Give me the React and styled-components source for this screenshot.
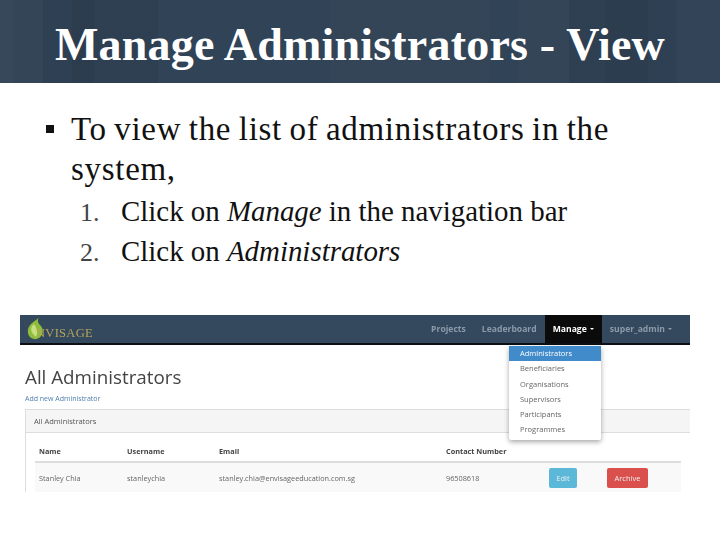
import React from 'react'
import styled, { createGlobalStyle } from 'styled-components'

const Global = createGlobalStyle`
  html, body { margin: 0; padding: 0; background: #fff; }
`

const Slide = styled.div`
  width: 720px;
  height: 540px;
  overflow: hidden;
  background: #fff;
  font-family: "Liberation Serif", serif;
`

const Banner = styled.header`
  height: 83px;
  box-sizing: border-box;
  padding: 18px 0 0 55px;
  background:
    linear-gradient(90deg,
      rgba(255,255,255,.04) 0 2%,
      rgba(255,255,255,.025) 2% 6%,
      rgba(0,0,0,.015) 6% 10%,
      rgba(0,0,0,.07) 10% 13%,
      rgba(0,0,0,.025) 13% 22%,
      rgba(255,255,255,.01) 22% 46%,
      rgba(255,255,255,.018) 46% 68%,
      rgba(255,255,255,.01) 68% 72%,
      rgba(255,255,255,.025) 72% 79%,
      rgba(0,0,0,.025) 79% 84%,
      rgba(0,0,0,.06) 84% 90%,
      rgba(0,0,0,.015) 90% 94%,
      rgba(255,255,255,.015) 94% 100%),
    #2f4154;
`

const SlideTitle = styled.h1`
  margin: 0;
  font: 700 46px/54px "Liberation Serif", serif;
  letter-spacing: .2px;
  color: #fff;
  white-space: nowrap;
`

const Content = styled.section`
  padding: 26px 0 0 46px;
  height: 232px;
  box-sizing: border-box;
  color: #111;
`

const Point = styled.div`
  display: flex;
  font-size: 33px;
  letter-spacing: .7px;
  word-spacing: -1.4px;
  line-height: 40px;
`

const Bullet = styled.span`
  flex: none;
  width: 8px;
  height: 8px;
  margin: 16px 17px 0 0;
  background: #111;
`

const Steps = styled.ol`
  list-style: none;
  margin: 2px 0 0;
  padding: 0 0 0 34px;
`

const Step = styled.li`
  display: flex;
  align-items: baseline;
  height: 40px;
  font-size: 28.9px;
  line-height: 40px;
`

const StepNo = styled.span`
  width: 41px;
  font-size: 26px;
  color: #444;
`

const Shot = styled.div`
  position: relative;
  width: 670px;
  height: 178px;
  margin-left: 20px;
  font-family: "Open Sans", sans-serif;
  filter: blur(.45px);
`

const Nav = styled.nav`
  display: flex;
  justify-content: space-between;
  height: 28px;
  background: #35495e;
  border-bottom: 2px solid #0c1014;
`

const Brand = styled.div`
  position: relative;
  display: flex;
  align-items: flex-end;
  padding: 0 0 3px 16px;
`

const BrandName = styled.span`
  position: relative;
  font: 12.5px/14px "Liberation Serif", serif;
  color: #b5a55a;
  letter-spacing: .3px;
`

const LogoMark = styled.svg`
  position: absolute;
  left: 6px;
  top: 1px;
`

const NavItems = styled.div`
  display: flex;
  margin-right: 10px;
`

const NavItem = styled.a`
  display: flex;
  align-items: center;
  padding: 0 8px;
  font-size: 8.6px;
  font-weight: 700;
  color: ${p => (p.$active ? '#fff' : '#8b9aaa')};
  background: ${p => (p.$active ? '#0b0b0b' : 'transparent')};
`

const Caret = styled.i`
  width: 0;
  height: 0;
  margin-left: 3px;
  border: 2px solid transparent;
  border-top: 2.5px solid currentColor;
  border-bottom: 0;
`

const Menu = styled.ul`
  position: absolute;
  left: 489px;
  top: 31px;
  width: 92px;
  height: 94px;
  margin: 0;
  padding: 0;
  list-style: none;
  background: #fff;
  border-radius: 0 0 2px 2px;
  box-shadow: 0 2px 5px rgba(0,0,0,.35);
  z-index: 2;
`

const MenuItem = styled.li`
  height: 15.3px;
  padding-left: 11px;
  font-size: 7.5px;
  line-height: 15.3px;
  color: ${p => (p.$active ? '#fff' : '#666')};
  background: ${p => (p.$active ? '#428bca' : 'transparent')};
`

const PageTitle = styled.h2`
  margin: 20px 0 0 5px;
  font: 400 18.8px/24px "Open Sans", sans-serif;
  color: #444;
`

const AddLink = styled.a`
  display: block;
  margin: 5px 0 0 5px;
  font-size: 7px;
  line-height: 10px;
  color: #4f7fae;
`

const Panel = styled.div`
  margin: 5px 0 0 5px;
  border-left: 1px solid #ddd;
`

const PanelHead = styled.div`
  height: 22px;
  padding-left: 8px;
  background: #f5f5f5;
  border: 1px solid #ddd;
  border-width: 1px 0;
  font-size: 7.5px;
  line-height: 22px;
  color: #555;
`

const TableWrap = styled.div`
  margin: 0 9px;
  padding-top: 8px;
`

const Row = styled.div`
  display: grid;
  grid-template-columns: 88px 92px 227px 103px 58px 1fr;
  align-items: center;
  padding-left: 4px;
  height: ${p => p.$h}px;
  font-size: 7.3px;
  font-weight: ${p => (p.$head ? 700 : 400)};
  color: ${p => (p.$head ? '#444' : '#666')};
  background: ${p => (p.$head ? 'transparent' : '#f9f9f9')};
  border-bottom: ${p => (p.$head ? '2px solid #ddd' : '0')};
`

const ActionButton = styled.span`
  display: block;
  width: ${p => p.$w}px;
  height: 20px;
  border-radius: 2px;
  background: ${p => p.$bg};
  color: #eee;
  font-size: 7.5px;
  line-height: 20px;
  text-align: center;
`

const App = () => (
  <Slide>
    <Global />
    <Banner>
      <SlideTitle>Manage Administrators - View</SlideTitle>
    </Banner>
    <Content>
      <Point>
        <Bullet />
        <span>To view the list of administrators in the<br />system,</span>
      </Point>
      <Steps>
        <Step><StepNo>1.</StepNo><span>Click on <em>Manage</em> in the navigation bar</span></Step>
        <Step><StepNo>2.</StepNo><span>Click on <em>Administrators</em></span></Step>
      </Steps>
    </Content>
    <Shot>
      <Nav>
        <Brand>
          <LogoMark width="20" height="25" viewBox="0 0 20 25">
            <path d="M13 1 C11 4 8 5 5 8 C1 12 1 18 4 21 C7 24 12 24 15 20 C18 16 17 12 14 9 C12 7 11 4 13 1Z" fill="#8dbd3a" />
            <path d="M6 10 C4 14 6 18 10 21 C12 17 11 12 8 8Z" fill="#c6e07e" />
          </LogoMark>
          <BrandName>NVISAGE</BrandName>
        </Brand>
        <NavItems>
          <NavItem>Projects</NavItem>
          <NavItem>Leaderboard</NavItem>
          <NavItem $active>Manage<Caret /></NavItem>
          <NavItem>super_admin<Caret /></NavItem>
        </NavItems>
      </Nav>
      <Menu>
        <MenuItem $active>Administrators</MenuItem>
        <MenuItem>Beneficiaries</MenuItem>
        <MenuItem>Organisations</MenuItem>
        <MenuItem>Supervisors</MenuItem>
        <MenuItem>Participants</MenuItem>
        <MenuItem>Programmes</MenuItem>
      </Menu>
      <PageTitle>All Administrators</PageTitle>
      <AddLink>Add new Administrator</AddLink>
      <Panel>
        <PanelHead>All Administrators</PanelHead>
        <TableWrap>
          <Row $head $h={20}>
            <span>Name</span><span>Username</span><span>Email</span><span>Contact Number</span>
          </Row>
          <Row $h={29}>
            <span>Stanley Chia</span>
            <span>stanleychia</span>
            <span>stanley.chia@envisageeducation.com.sg</span>
            <span>96508618</span>
            <ActionButton $w={28} $bg="#5bb8d8">Edit</ActionButton>
            <ActionButton $w={41} $bg="#d9504d">Archive</ActionButton>
          </Row>
        </TableWrap>
      </Panel>
    </Shot>
  </Slide>
)

export default App
